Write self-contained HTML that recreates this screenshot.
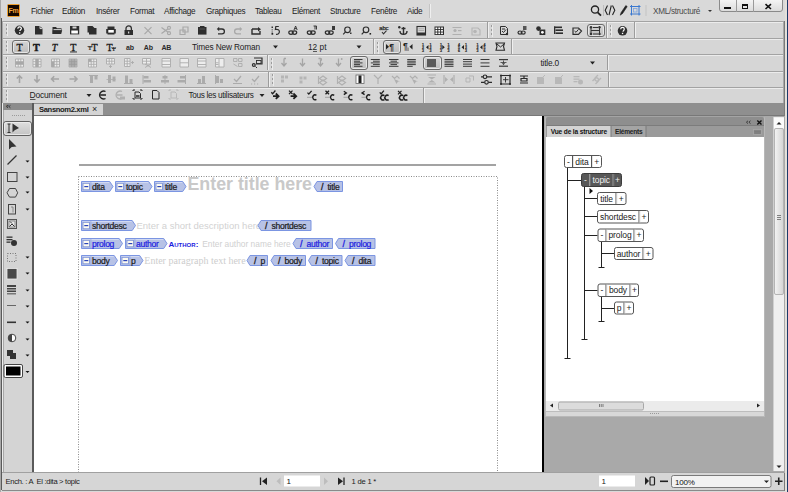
<!DOCTYPE html>
<html><head><meta charset="utf-8">
<style>
*{margin:0;padding:0;box-sizing:border-box}
html,body{width:788px;height:492px;overflow:hidden;background:#d9d9d9;font-family:"Liberation Sans",sans-serif;position:relative}
.a{position:absolute}
.mt{position:absolute;top:7px;font-size:8.2px;color:#222;letter-spacing:-0.3px;white-space:nowrap}
.tb{position:absolute;left:2px;right:4px;background:#d6d6d6;border-top:1px solid #a3a3a3;border-left:1px solid #a8a8a8;border-right:1px solid #a8a8a8}
.tb:before{content:"";position:absolute;left:0;right:0;top:0;height:1px;background:#ececec}
.grip{position:absolute;left:3px;top:2px;width:1px;height:12px;background:repeating-linear-gradient(#9c9c9c 0 2px,transparent 2px 4px);box-shadow:1px 0 0 rgba(255,255,255,.5)}
.sep{position:absolute;width:1px;background:#9c9c9c;box-shadow:1px 0 0 #efefef}
.ic{position:absolute;width:12px;height:12px}
.sel{position:absolute;border:1px solid #6a6a6a;border-radius:3px;background:linear-gradient(#d4d4d4,#bdbdbd);box-shadow:inset 0 0 0 1px #e6e6e6}
.dd{position:absolute;width:0;height:0;border-left:3px solid transparent;border-right:3px solid transparent;border-top:3px solid #1a1a1a}
.tag{position:absolute;height:11px}
.tt{position:absolute;font-size:8px;color:#1a1a1a;white-space:nowrap;top:1px}
.node{position:absolute;height:14px;border:1px solid #444;border-radius:3px;background:#fff;font-size:9px;color:#222;display:flex}
.node span{border-right:1px solid #444;display:block;text-align:center;line-height:12px}
.node span:last-child{border-right:0}
.vl{position:absolute;width:1px;background:#222}
.hl{position:absolute;height:1px;background:#222}
</style></head><body>

<!-- top window frame -->
<div class="a" style="left:0;top:0;width:1px;height:492px;background:#a8a8a8"></div>
<div class="a" style="left:1px;top:18px;width:1px;height:472px;background:#5a5a5a"></div>
<div class="a" style="left:2px;top:103px;width:1px;height:369px;background:#ececec"></div>
<div class="a" style="left:787px;top:0;width:1px;height:492px;background:#1c3a6a"></div>
<div class="a" style="left:785px;top:0;width:2px;height:492px;background:#e4e0da"></div>
<div class="a" style="left:784px;top:21px;width:1px;height:470px;background:#7a7a7a"></div>

<!-- Menu bar -->
<div class="a" style="left:6px;top:3px;width:15px;height:15px;background:#cfd9e6;border-radius:2px;opacity:.8"></div>
<div class="a" style="left:6.5px;top:4px;width:13.5px;height:12.5px;background:#160800;border:1px solid #f0a030;border-radius:1.5px"></div>
<div class="a" style="left:8.5px;top:6px;font-size:7px;font-weight:bold;color:#f5a53a;letter-spacing:-0.2px;line-height:10px">Fm</div>
<div class="mt" style="left:31px">Fichier</div>
<div class="mt" style="left:62px">Edition</div>
<div class="mt" style="left:96px">Insérer</div>
<div class="mt" style="left:130px">Format</div>
<div class="mt" style="left:164px">Affichage</div>
<div class="mt" style="left:206px">Graphiques</div>
<div class="mt" style="left:255px">Tableau</div>
<div class="mt" style="left:292px">Elément</div>
<div class="mt" style="left:330px">Structure</div>
<div class="mt" style="left:371px">Fenêtre</div>
<div class="mt" style="left:407px">Aide</div>
<div class="sep" style="left:429px;top:4px;height:14px;background:#c4c4c4"></div>

<div class="mt" style="left:653px;color:#4a4a4a">XML/structuré</div>
<div class="dd" style="left:707.5px;top:10px;border-left-width:2.5px;border-right-width:2.5px;border-top-width:2.5px;border-top-color:#333"></div>

<!-- window buttons -->
<div class="a" style="left:719px;top:-1px;width:64px;height:13px;border:1px solid #8a8a8a;border-radius:0 0 3px 3px;background:linear-gradient(#f4f4f4,#dcdcdc)"></div>
<div class="a" style="left:736px;top:0;width:1px;height:12px;background:#9a9a9a"></div>
<div class="a" style="left:753px;top:0;width:1px;height:12px;background:#9a9a9a"></div>
<div class="a" style="left:724px;top:7px;width:7px;height:2px;background:#111"></div>
<div class="a" style="left:742px;top:4px;width:6px;height:5px;border:1px solid #111;border-top-width:2px"></div>

<!-- Toolbars -->
<div class="tb" style="top:21px;height:17px"><div class="grip"></div></div>
<div class="tb" style="top:38px;height:17px"><div class="grip"></div></div>
<div class="tb" style="top:54px;height:17px"><div class="grip"></div></div>
<div class="tb" style="top:71px;height:16px"><div class="grip"></div></div>
<div class="tb" style="top:87px;height:16px"><div class="grip"></div></div>


<!-- toolbar separators -->
<div class="sep" style="left:487px;top:22px;height:16px"></div><div class="grip" style="left:491px;top:25px"></div>
<div class="sep" style="left:606px;top:22px;height:16px"></div><div class="grip" style="left:610px;top:25px"></div>
<div class="sep" style="left:634px;top:22px;height:16px"></div>
<div class="sep" style="left:373px;top:39px;height:15px"></div><div class="grip" style="left:377px;top:42px"></div>
<div class="sep" style="left:511px;top:39px;height:15px"></div>
<div class="sep" style="left:267px;top:55px;height:15px"></div><div class="grip" style="left:271px;top:58px"></div>
<div class="sep" style="left:607px;top:55px;height:15px"></div>
<div class="sep" style="left:268px;top:72px;height:15px"></div><div class="grip" style="left:272px;top:74px"></div>
<div class="sep" style="left:608px;top:72px;height:15px"></div>
<div class="sep" style="left:423px;top:88px;height:15px"></div>
<!-- selected boxes -->
<div class="sel" style="left:587px;top:24px;width:18px;height:13px"></div>
<div class="sel" style="left:12px;top:40px;width:18px;height:14px"></div>
<div class="sel" style="left:383px;top:40px;width:18px;height:14px"></div>
<div class="sel" style="left:350px;top:56px;width:18px;height:14px"></div>
<div class="sel" style="left:423px;top:56px;width:19px;height:14px"></div>

<!-- Tab bar -->
<div class="a" style="left:33px;top:103px;width:751px;height:13px;background:#8f8f8f;border-bottom:1px solid #787878"></div>
<div class="a" style="left:34px;top:104px;width:69px;height:11px;background:#d4d4d4"></div>
<div class="a" style="left:39px;top:105px;font-size:7.6px;font-weight:bold;color:#1a1a1a;letter-spacing:-0.35px;line-height:9px">Sansnom2.xml</div>
<div class="a" style="left:92px;top:104px;font-size:9px;color:#222;line-height:10px">×</div>

<!-- Left tool panel -->
<div class="a" style="left:3px;top:103px;width:31px;height:370px;background:#d4d4d4;border-right:2px solid #5a5a5a;border-left:1px solid #a8a8a8"></div>
<div class="a" style="left:3px;top:103px;width:29px;height:7px;background:#8c8c8c"></div>
<div class="a" style="left:6px;top:102px;font-size:6px;color:#444">«</div>

<!-- Document area -->
<div class="a" style="left:34px;top:116px;width:508px;height:357px;background:#fff"></div>
<div class="a" style="left:542px;top:116px;width:2px;height:357px;background:#000"></div>
<div class="a" style="left:544px;top:116px;width:241px;height:357px;background:#a9a9a9"></div>

<!-- Right panel -->
<div class="a" style="left:545px;top:116px;width:220px;height:301px;background:linear-gradient(#8e8e8e 0,#8e8e8e 8px,#7c7c7c 8px,#7c7c7c 9px,#9a9a9a 9px);border:1px solid #b8b8b8;border-top-color:#a4a4a4;border-radius:3px 3px 0 0"></div>
<div class="a" style="left:546px;top:137px;width:218px;height:264px;background:#fff"></div>

<!-- Status bar -->
<div class="a" style="left:2px;top:472px;width:782px;height:19px;background:#d6d6d6;border-top:1px solid #a0a0a0;border-bottom:1px solid #8a8a8a"></div>

<svg class="a" style="left:0;top:0" width="788" height="492" viewBox="0 0 788 492" shape-rendering="geometricPrecision">
<!-- ===== Toolbar 1 ===== -->
<g fill="#2e2e2e" stroke="none">
 <circle cx="19.5" cy="30.3" r="4.7"/>
 <path d="M35 26h5l2.5 2.6V34.6H35z"/>
 <path d="M52.5 27h3.5l1 1.2h4.5v2.3h-9z M52.3 30.2h9.9l-1 3.8h-8.9z"/>
 <path d="M70 26h9.2v8.4H70z"/>
 <path d="M87.5 26h5l2.5 2.5v6H89v-2h-1.5z M90 28h6.5v6.5H90z" />
 <path d="M107.5 26.5h7v2.5h1.3v4.5h-1.3v1h-7v-1h-1.3v-4.5h1.3z"/>
 <path d="M124.5 30h8.5v5h-8.5z"/>
 <path d="M198 27h8.5v7.6H198z"/>
</g>
<path d="M17.8 28.7c0-1.2 0.8-1.8 1.8-1.8s1.8 0.6 1.8 1.6c0 1.2-1.6 1.3-1.6 2.6" stroke="#fff" stroke-width="1.2" fill="none"/>
<rect x="19" y="32.3" width="1.3" height="1.3" fill="#fff"/>
<path d="M40 26v2.6h2.5" stroke="#fff" stroke-width="0.8" fill="none"/>
<rect x="71.3" y="30.5" width="6.6" height="3" fill="#fff"/><path d="M53.5 29.6h7.5" stroke="#fff" stroke-width="0.8"/>
<rect x="72.5" y="26.5" width="4" height="2" fill="#d6d6d6"/>
<rect x="108.3" y="30" width="5.5" height="2.6" fill="#fff"/>
<path d="M126 30v-1.5a2.7 2.7 0 0 1 5.4 0V30" stroke="#2e2e2e" stroke-width="1.3" fill="none"/>
<rect x="128.2" y="31.5" width="1" height="2" fill="#fff"/>
<rect x="200" y="26" width="4.5" height="2" fill="#2e2e2e"/>
<rect x="199.5" y="28.5" width="5.5" height="1" fill="#555"/>
<!-- gray disabled -->
<g stroke="#a8a8a8" stroke-width="1.2" fill="none">
 <path d="M144.5 27.2l7 7M151.5 27.2l-7 7"/>
 <circle cx="169" cy="27.8" r="1.5"/><circle cx="169" cy="33.2" r="1.5"/>
 <path d="M161.5 27.5l6.3 4.5M161.5 33.5l6.3-4.5"/>
 <path d="M183 27h5v5h-5z M180 30h5v4.5h-5z"/>
</g>
<!-- undo -->
<path d="M218.5 29h3.5a2.4 2.4 0 0 1 0 4.8h-4" stroke="#2e2e2e" stroke-width="1.3" fill="none"/>
<path d="M216.8 29l2.4-2.2v4.4z" fill="#2e2e2e"/>
<path d="M240.5 29h-3.5a2.4 2.4 0 0 0 0 4.8h4" stroke="#a8a8a8" stroke-width="1.3" fill="none"/>
<path d="M242.2 29l-2.4-2.2v4.4z" fill="#a8a8a8"/>
<!-- repeat box -->
<path d="M252 29h6M252 29v5h8v-3" stroke="#2e2e2e" stroke-width="1.4" fill="none"/>
<path d="M258 27l3 2.2-3 2.2z" fill="#2e2e2e"/>
<!-- !5 -->
<rect x="271.5" y="26.5" width="1.5" height="1.5" fill="#333"/><rect x="271.5" y="29" width="1.5" height="1.5" fill="#888"/><rect x="271.5" y="31.3" width="1.5" height="1.5" fill="#888"/><rect x="271.5" y="33" width="1.7" height="1.7" fill="#222"/>
<path d="M275.3 26.5h3.5M275.8 26.5l-0.4 3c2.5-0.5 4 0.5 4 2.2 0 1.6-1.4 2.8-3.4 2.6" stroke="#2e2e2e" stroke-width="1.2" fill="none"/>
<!-- links -->
<g stroke="#2e2e2e" stroke-width="1.2" fill="none">
 <ellipse cx="291" cy="32.6" rx="2.2" ry="1.7"/><ellipse cx="294.5" cy="32.6" rx="2.2" ry="1.7"/>
 <ellipse cx="309.5" cy="32.6" rx="2.2" ry="1.7"/><ellipse cx="313" cy="32.6" rx="2.2" ry="1.7"/>
 <ellipse cx="327.5" cy="32.6" rx="2.2" ry="1.7"/><ellipse cx="331" cy="32.6" rx="2.2" ry="1.7"/>
 <circle cx="347.5" cy="29.8" r="2.8"/><path d="M345.5 31.8l-2.3 2.6"/>
 <circle cx="366" cy="29.8" r="2.8"/><path d="M364 31.8l-2.3 2.6"/>
</g>
<path d="M294 30l1.6-4 1.6 4M294.6 28.6h2" stroke="#2e2e2e" stroke-width="0.9" fill="none"/>
<path d="M313.5 26h3v3.5M315 26v3.5" stroke="#2e2e2e" stroke-width="0.9" fill="none"/>
<rect x="332" y="26" width="3" height="4" fill="#3a3a3a"/>
<rect x="350" y="32.5" width="1.5" height="1.5" fill="#333"/>
<rect x="369.5" y="33" width="1.6" height="1.6" fill="#222"/>
<text x="379.3" y="30.2" font-family="Liberation Sans" font-size="6" fill="#2a2a2a" stroke="#2a2a2a" stroke-width="0.25" letter-spacing="-0.2">abc</text>
<path d="M382 32l1.5 1.8 3-3.2" stroke="#333" stroke-width="1.1" fill="none"/>
<!-- anchor -->
<g stroke="#2e2e2e" stroke-width="1.4" fill="none">
 <path d="M403.5 27v7.5M400 31c0 2.2 1.5 3.3 3.5 3.3s3.5-1.1 3.5-3.3M401.5 28.5h4"/>
</g>
<circle cx="399.3" cy="27.3" r="1.2" fill="#2e2e2e"/>
<!-- table box -->
<rect x="417" y="26.5" width="8.5" height="8.5" fill="none" stroke="#2e2e2e" stroke-width="1.1"/>
<rect x="417" y="32.5" width="8.5" height="2.5" fill="#2e2e2e"/>
<path d="M418.5 28.8h5.5M418.5 30.5h5.5" stroke="#999" stroke-width="0.7"/>
<!-- grid -->
<rect x="434.5" y="26.5" width="9.5" height="8.5" fill="#2e2e2e"/>
<g fill="#fff"><rect x="435.5" y="27.5" width="1.8" height="1.6"/><rect x="438.3" y="27.5" width="1.8" height="1.6"/><rect x="441.1" y="27.5" width="1.8" height="1.6"/>
<rect x="435.5" y="30" width="1.8" height="1.6"/><rect x="438.3" y="30" width="1.8" height="1.6"/><rect x="441.1" y="30" width="1.8" height="1.6"/>
<rect x="435.5" y="32.5" width="1.8" height="1.6"/><rect x="438.3" y="32.5" width="1.8" height="1.6"/><rect x="441.1" y="32.5" width="1.8" height="1.6"/></g>
<!-- gray -->
<g fill="#b0b0b0"><rect x="452.5" y="27" width="9" height="1"/><rect x="452.5" y="34" width="9" height="1"/><circle cx="455" cy="30.5" r="1.6"/><rect x="458" y="30" width="3.5" height="1.2"/></g>
<path d="M472 28h6l2 2v5h-8z" fill="none" stroke="#b5b5b5" stroke-width="1.1"/><circle cx="475" cy="31.5" r="1.8" fill="#b5b5b5"/>
<!-- second section -->
<g stroke="#2e2e2e" stroke-width="1" fill="none">
 <path d="M500.5 26.5h5l2 2v6h-7z"/>
 <path d="M502 29h3M502 31l1.5 1.5 2.5-3"/>
 <ellipse cx="520" cy="32.6" rx="2" ry="1.6" stroke-width="1.2"/><ellipse cx="523.2" cy="32.6" rx="2" ry="1.6" stroke-width="1.2"/>
</g>
<rect x="523" y="26" width="3.5" height="4" fill="#555"/>
<circle cx="507" cy="34" r="1.2" fill="#2e2e2e"/>
<circle cx="538.5" cy="28.6" r="2.3" fill="#2e2e2e"/>
<rect x="539.5" y="29.5" width="5.8" height="5.5" fill="#2e2e2e"/>
<circle cx="542.4" cy="32.3" r="1.4" fill="#fff"/>
<g fill="#2e2e2e"><rect x="554" y="26.5" width="8" height="1.6"/><rect x="555.5" y="29.4" width="7.5" height="1.6"/><rect x="555.5" y="32.4" width="7.5" height="1.6"/><rect x="554" y="26.5" width="1.3" height="7.5"/></g>
<path d="M573 28h5.5l3 3-3 3.3H573z" fill="none" stroke="#2e2e2e" stroke-width="1.2"/>
<path d="M574.5 31l1.5 1.3 2.5-3" stroke="#2e2e2e" stroke-width="1" fill="none"/>
<g stroke="#333" stroke-width="1" fill="none"><path d="M591 27v7M599.5 27v7M591 30.5h8.5"/></g>
<g fill="#333"><circle cx="591" cy="27.3" r="1.2"/><circle cx="591" cy="34" r="1.2"/><circle cx="599.5" cy="27.3" r="1.2"/><circle cx="599.5" cy="34" r="1.2"/><rect x="593" y="27" width="5" height="1"/><rect x="593" y="33.5" width="5" height="1"/></g>
<circle cx="622.5" cy="30.8" r="4.8" fill="#2e2e2e"/>
<path d="M620.7 29.2c0-1.2 0.8-1.8 1.8-1.8s1.8 0.6 1.8 1.6c0-0 0 1.3-1.6 2.6" stroke="#fff" stroke-width="1.2" fill="none"/>
<rect x="621.9" y="32.8" width="1.3" height="1.3" fill="#fff"/>
</svg>

<svg class="a" style="left:0;top:0" width="788" height="492" viewBox="0 0 788 492">
<!-- ===== Toolbar 2 ===== -->
<g font-family="Liberation Serif" fill="#1a1a1a" stroke="#1a1a1a" stroke-width="0.35">
 <text x="16.5" y="51" font-size="10">T</text>
 <text x="33" y="51" font-size="10" font-weight="bold" stroke-width="0.5">T</text>
 <text x="51.8" y="51" font-size="10" font-style="italic">T</text>
 <text x="70.3" y="50.5" font-size="10">T</text>
 <text x="91.5" y="51" font-size="10">T</text>
 <text x="106.5" y="51" font-size="10">T</text>
</g>
<rect x="70" y="51.5" width="7" height="0.9" fill="#222"/>
<text x="87.8" y="49.5" font-family="Liberation Serif" font-size="7" fill="#222" stroke="#222" stroke-width="0.2">T</text>
<rect x="88.2" y="46.5" width="4.2" height="0.8" fill="#222"/>
<text x="111.5" y="50.5" font-family="Liberation Serif" font-size="7" fill="#222" stroke="#222" stroke-width="0.2">T</text>
<rect x="111.8" y="48" width="4" height="0.8" fill="#222"/>
<g font-family="Liberation Sans" font-weight="bold" fill="#2a2a2a" font-size="7">
 <text x="126" y="50.2" letter-spacing="-0.2">ab</text>
 <text x="143.8" y="50.2" letter-spacing="-0.2">Ab</text>
 <text x="161.5" y="50.2" letter-spacing="-0.3">AB</text>
</g>
<text x="192" y="50" font-family="Liberation Sans" font-size="8.3" fill="#222" letter-spacing="-0.15">Times New Roman</text>
<path d="M273 45.5h5l-2.5 3z" fill="#222"/>
<text x="308" y="50" font-family="Liberation Sans" font-size="8.3" fill="#222">12 pt</text>
<rect x="313" y="51" width="4" height="0.7" fill="#222"/>
<path d="M356.5 45.5h5l-2.5 3z" fill="#222"/>
<!-- paragraph icons -->
<path d="M386 44l3 2.8-3 2.8z" fill="#222"/>
<text x="389.2" y="50" font-family="Liberation Sans" font-weight="bold" font-size="8.5" fill="#222">¶</text>
<text x="403" y="49" font-family="Liberation Sans" font-weight="bold" font-size="8.5" fill="#222">¶</text>
<path d="M412.5 44l-3 2.8 3 2.8z" fill="#222"/>
<rect x="406.5" y="47.5" width="2.5" height="3.5" fill="#999"/>
<g fill="#222" stroke="#222" stroke-width="0.15" font-family="Liberation Sans" font-weight="bold" font-size="3.6">
 <text x="422" y="45.5">1</text><text x="422" y="48.5">2</text><text x="422" y="51.5">3</text>
 <text x="429.5" y="45.5">1</text><text x="429.5" y="48.5">2</text><text x="429.5" y="51.5">3</text>
 <text x="440" y="45.5">1</text><text x="440" y="48.5">2</text><text x="440" y="51.5">3</text>
 <text x="447.5" y="45.5">1</text><text x="447.5" y="48.5">2</text><text x="447.5" y="51.5">3</text>
 <text x="458" y="45.5">4</text><text x="458" y="48.5">5</text><text x="458" y="51.5">6</text>
 <text x="465" y="45.5">1</text><text x="465" y="48.5">2</text><text x="465" y="51.5">3</text>
 <text x="476.5" y="45.5">1</text><text x="476.5" y="48.5">2</text><text x="476.5" y="51.5">3</text>
 <text x="483.5" y="45.5">4</text><text x="483.5" y="48.5">5</text><text x="483.5" y="51.5">6</text>
</g>
<path d="M428.5 45l-2.5 2.2 2.5 2.2z M442.3 45l2.5 2.2-2.5 2.2z M464 45l-2.5 2.2 2.5 2.2z M482.5 45l-2.5 2.2 2.5 2.2z" fill="#222"/>
<path d="M496 43h8.5l-1 3.5 1 3.8h-8.5l1-3.8z" fill="none" stroke="#2a2a2a" stroke-width="1.1"/>
<path d="M497 44l3.5 3 3.5-3" stroke="#2a2a2a" stroke-width="1" fill="none"/>
<!-- ===== Toolbar 3 ===== -->
<g fill="#ededed"><rect x="15.5" y="59" width="8" height="8"/><rect x="33" y="59" width="8" height="8"/><rect x="51.5" y="59" width="8" height="8"/><rect x="88.5" y="59" width="8" height="8"/><rect x="106.5" y="58.5" width="8" height="5.5"/><rect x="124.5" y="58.5" width="5.5" height="8"/><rect x="142.5" y="58.5" width="8" height="5.5"/><rect x="162" y="58.5" width="8.5" height="8.5"/><rect x="180" y="58.5" width="8.5" height="8.5"/><rect x="197.5" y="58.5" width="8.5" height="8.5"/><rect x="215.5" y="58.5" width="8.5" height="8.5"/></g>
<g fill="none" stroke="#ababab" stroke-width="0.9">
 <path d="M15.5 59h8v8h-8z M15.5 61.7h8M15.5 64.3h8M18.2 59v8M20.8 59v8"/>
 <path d="M33 59h8v8h-8z M33 61.7h8M33 64.3h8M35.7 59v8M38.3 59v8"/>
 <path d="M51.5 59h8v8h-8z M51.5 61.7h8M51.5 64.3h8M54.2 59v8M56.8 59v8"/>
 <path d="M69 59h8v8h-8z M69 61.7h8M69 64.3h8M71.7 59v8M74.3 59v8"/>
 <path d="M88.5 59h8v8h-8z M88.5 61.7h8M88.5 64.3h8M91.2 59v8M93.8 59v8"/>
 <path d="M106.5 58.5h8v5.5h-8z M106.5 61.2h8M109.2 58.5v5.5M111.8 58.5v5.5M110.5 65v3M109 66.5h3"/>
 <path d="M124.5 58.5h5.5v8h-5.5z M124.5 61.2h5.5M124.5 63.8h5.5M127.2 58.5v8M131 62.5h3M132.5 61v3"/>
 <path d="M142.5 58.5h8v5.5h-8z M142.5 61.2h8M146.5 58.5v5.5M145 64l6 3.5M145 67.5l6-3.5"/>
 <path d="M162 58.5h8.5v8.5H162z M162 61h8.5M162 64.5h8.5"/>
 <path d="M180 58.5h8.5v8.5H180z M180 62.8h8.5"/>
 <path d="M197.5 58.5h8.5v8.5h-8.5z M197.5 61h8.5M197.5 64.5h8.5"/>
 <path d="M215.5 58.5h8.5v8.5h-8.5z M215.5 62.8h3M219 58.5v8.5M215.5 64.5h3"/>
 <path d="M233.5 58.5h3.5v3h-3.5z M238.5 58.5h3.5v3h-3.5z M238.5 63.5h3.5v3h-3.5z M233.5 64l4 2.5"/>
</g>
<g fill="#a8a8a8">
 <rect x="15.5" y="61.7" width="8" height="2.6"/>
 <rect x="35.7" y="59" width="2.6" height="8"/>
 <rect x="51.5" y="61.7" width="2.7" height="5.3"/>
 <rect x="69" y="59" width="8" height="8" fill="#b0b0b0"/>
 <rect x="88.5" y="59" width="2.7" height="2.7"/>
</g>
<path d="M69 61.7h8M69 64.3h8M71.7 59v8M74.3 59v8" stroke="#9a9a9a" stroke-width="0.8"/>
<path d="M254 58h8v6h-6" fill="none" stroke="#2e2e2e" stroke-width="1.2"/>
<rect x="256.5" y="60.5" width="4.5" height="3" fill="none" stroke="#2e2e2e" stroke-width="0.9"/>
<circle cx="253.8" cy="65" r="2" fill="#2e2e2e"/><circle cx="253.8" cy="65" r="0.8" fill="#d6d6d6"/>
<path d="M255.5 66.5l1.5 1.5" stroke="#2e2e2e" stroke-width="1"/>
<g stroke="#a5a5a5" stroke-width="1.3" fill="none">
 <path d="M284 58.5v7M281.5 63l2.5 3 2.5-3M284 58.5h2"/>
 <path d="M302.5 58.5v7M300 63l2.5 3 2.5-3"/>
 <path d="M320.5 59.5v6M318 63l2.5 3 2.5-3M318.5 58.5h2a1 1 0 0 1 0 2"/>
 <path d="M338.5 58.5v7M336 63l2.5 3 2.5-3"/>
</g>
<circle cx="341.7" cy="59" r="0.9" fill="#a5a5a5"/>
<!-- align -->
<g fill="#3a3a3a">
 <rect x="354" y="59" width="8.5" height="1"/><rect x="354" y="60.7" width="6" height="1"/><rect x="354" y="62.4" width="8.5" height="1"/><rect x="354" y="64.1" width="6" height="1"/><rect x="354" y="65.8" width="8.5" height="1"/>
 <rect x="370.8" y="59" width="9" height="1"/><rect x="373" y="60.7" width="6.8" height="1"/><rect x="370.8" y="62.4" width="9" height="1"/><rect x="373" y="64.1" width="6.8" height="1"/><rect x="370.8" y="65.8" width="9" height="1"/>
 <rect x="389" y="59" width="9.5" height="1"/><rect x="390.5" y="60.7" width="6.5" height="1"/><rect x="389" y="62.4" width="9.5" height="1"/><rect x="390.5" y="64.1" width="6.5" height="1"/><rect x="389" y="65.8" width="9.5" height="1"/>
 <rect x="407.2" y="59" width="8.6" height="1"/><rect x="407.2" y="60.7" width="8.6" height="1"/><rect x="407.2" y="62.4" width="8.6" height="1"/><rect x="407.2" y="64.1" width="8.6" height="1"/><rect x="407.2" y="65.8" width="5.5" height="1"/>
 <rect x="427" y="59" width="9" height="8" fill="#5a5a5a"/>
 <rect x="444.5" y="59" width="9" height="1"/><rect x="444.5" y="60.7" width="9" height="1"/><rect x="444.5" y="62.4" width="9" height="1"/><rect x="444.5" y="64.1" width="9" height="1"/><rect x="444.5" y="65.8" width="9" height="1"/>
 <rect x="463" y="59" width="9" height="1"/><rect x="463" y="61.2" width="9" height="1"/><rect x="463" y="63.6" width="9" height="1"/><rect x="463" y="65.8" width="9" height="1"/>
 <rect x="480.5" y="59" width="9" height="1"/><rect x="480.5" y="62.4" width="9" height="1"/><rect x="480.5" y="65.8" width="9" height="1"/>
 <rect x="499" y="59" width="9" height="1.2"/><rect x="499" y="65.6" width="9" height="1.2"/><rect x="500.5" y="62.2" width="6" height="0.8"/>
</g>
<path d="M503.5 60.5v4M502.2 63.2l1.3 1.5 1.3-1.5" stroke="#3a3a3a" stroke-width="0.8" fill="none"/>
<text x="540.5" y="65.5" font-family="Liberation Sans" font-size="8.3" fill="#222" letter-spacing="-0.2">title.0</text>
<path d="M590 61.5h5l-2.5 3z" fill="#222"/>
<!-- ===== Toolbar 4 ===== -->
<g stroke="#a5a5a5" stroke-width="1.6" fill="none">
 <path d="M19.5 76v7M16.8 78.5l2.7-2.7 2.7 2.7"/>
 <path d="M37 75v7M34.3 79.3l2.7 2.7 2.7-2.7"/>
 <path d="M51.5 79h7.5M54.2 76.3l-2.7 2.7 2.7 2.7"/>
 <path d="M69.5 79h7.5M74.3 76.3l2.7 2.7-2.7 2.7"/>
</g>
<g fill="#ababab">
 <rect x="89" y="75" width="9" height="1"/><rect x="90" y="76" width="3" height="7"/><rect x="94.5" y="76" width="3" height="3.5"/>
 <rect x="106.5" y="79" width="9" height="0.8"/><rect x="108" y="75" width="3" height="8"/><rect x="112.5" y="76.5" width="3" height="5"/>
 <rect x="124" y="83" width="9" height="1"/><rect x="125" y="75.5" width="3" height="7.5"/><rect x="129.5" y="79" width="3" height="4"/>
 <rect x="142.5" y="75" width="1" height="9"/><rect x="143.5" y="76" width="5" height="2.5"/><rect x="143.5" y="80" width="7.5" height="2.5"/>
 <rect x="164.5" y="75" width="1" height="9"/><rect x="162.5" y="76" width="5" height="2.5"/><rect x="161" y="80" width="8" height="2.5"/>
 <rect x="185" y="75" width="1" height="9"/><rect x="180" y="76" width="5" height="2.5"/><rect x="177.5" y="80" width="7.5" height="2.5"/>
 <rect x="197" y="83" width="9" height="1"/><rect x="198" y="79" width="3" height="4"/><rect x="202" y="76" width="3" height="7"/>
 <rect x="215" y="75" width="1" height="9"/><rect x="216" y="76" width="3" height="7"/><rect x="220" y="79" width="3" height="4"/>
 <rect x="233" y="83" width="9" height="1"/><rect x="251" y="83.5" width="1.2" height="1"/><rect x="254" y="83.5" width="1.2" height="1"/><rect x="257" y="83.5" width="1.2" height="1"/>
</g>
<path d="M234 79l2.5 2.5 4.5-5.5M252 79l2.5 2.5 4.5-5.5" stroke="#ababab" stroke-width="1.3" fill="none"/>
<g fill="#b5b5b5">
 <rect x="281" y="75.5" width="3" height="3"/><rect x="285" y="75.5" width="3" height="3"/><rect x="281" y="79.5" width="3" height="3"/>
 <rect x="299.5" y="76.5" width="3" height="3"/><rect x="303.5" y="76.5" width="3" height="3"/><rect x="299.5" y="80.5" width="3" height="3"/>
</g>
<g stroke="#b0b0b0" stroke-width="1.2" fill="none">
 <path d="M318.5 76v8M323 76l3.5 2.5-3.5 2.5-3.5-2.5z M323 80l3.5 2.5-3.5 2.5-3.5-2.5z"/>
 <path d="M337.5 76v8M342 76l3.5 2.5-3.5 2.5-3.5-2.5z M342 80l3.5 2.5-3.5 2.5-3.5-2.5z"/>
 <path d="M374 75l4 4 4-4M378 79v5"/>
 <path d="M392 76l2.5 2.5 2.5-2.5 2.5 2.5"/>
 <path d="M410 76l2.5 2.5 2.5-2.5 2.5 2.5"/>
 <path d="M427.5 75h8.5M427.5 84h8.5"/>
 <path d="M444 75v9M454 75v9"/>
</g>
<rect x="356" y="75" width="8" height="8.5" fill="#fff" stroke="#666" stroke-width="0.8"/>
<rect x="358.5" y="75.5" width="3" height="7.5" fill="#1e1e1e"/>
<path d="M394 79l2.5 5 1.5-2.5 2 0z M412 79l2.5 5 1.5-2.5 2 0z M428 77h7.5l-3.7 2.5z M428 82.5h7.5l-3.7-2.5z M445 77v5l3-2.5z M453 77v5l-3-2.5z" fill="#b0b0b0"/>
<path d="M466 78h4v4h-4z M469 76h4.5v4.5" fill="none" stroke="#b5b5b5" stroke-width="1"/>
<!-- dark align icons -->
<g stroke="#2a2a2a" stroke-width="1.2" fill="none">
 <circle cx="485" cy="76.8" r="1.8"/><circle cx="486.5" cy="82.3" r="1.8"/>
 <path d="M481 76.8h2M487 76.8h5M481 82.3h3.5M488.5 82.3h3.5"/>
 <path d="M501 75.5h9v8.5h-9z"/>
 <path d="M520 76h8M520 83h8M524 76v2.5M521 78.5h6v2.5h-6z"/>
</g>
<path d="M505.5 77v5.5M503 79.7h5.5" stroke="#2a2a2a" stroke-width="0.9"/>
<g fill="#2a2a2a"><circle cx="501" cy="75.5" r="1"/><circle cx="510" cy="75.5" r="1"/><circle cx="501" cy="84" r="1"/><circle cx="510" cy="84" r="1"/></g>
<g fill="#b8b8b8">
 <path d="M537 77h6l1 1v6h-7z M555 77h6l1 1v6h-7z"/>
 <rect x="573.5" y="76" width="6" height="1.3"/><rect x="573.5" y="78.5" width="6" height="1.3"/><rect x="573.5" y="81" width="4" height="1.3"/><circle cx="580.5" cy="82" r="2.5"/>
</g>
<path d="M543 77l2-2M561 77l2-2" stroke="#b8b8b8" stroke-width="1"/>
<g stroke="#b8b8b8" stroke-width="1.4" fill="none"><path d="M592.5 81l2.5-2.5a2 2 0 0 1 3 3l-2.5 2.5 M601 78l-2.5 2.5a2 2 0 0 1-3-3l2.5-2.5"/></g>
</svg>

<svg class="a" style="left:0;top:0" width="788" height="492" viewBox="0 0 788 492">
<!-- ===== Toolbar 5 ===== -->
<text x="29.5" y="98" font-family="Liberation Sans" font-size="8.5" fill="#222" letter-spacing="-0.2">Document</text>
<rect x="30" y="99" width="5.5" height="0.7" fill="#222"/>
<path d="M86.5 94h5l-2.5 3z" fill="#222"/>
<path d="M105.5 91.5a4 4 0 1 0 0 7M100.5 95h5.5" stroke="#222" stroke-width="1.4" fill="none"/>
<path d="M122 91.5a4 4 0 1 0 0 7M117 95h5.5" stroke="#b0b0b0" stroke-width="1.4" fill="none"/>
<rect x="120" y="96.5" width="5" height="3" fill="#b0b0b0"/>
<g stroke="#2a2a2a" stroke-width="1" fill="none">
 <path d="M133 91v-1h2M140 90h2v1M142 98v1h-2M135 99h-2v-1"/>
 <path d="M135 92h4l1.5 1.5v4.5H135z"/>
 <path d="M152.5 90.5h4.5l2 2v6.5h-6.5z"/>
</g>
<rect x="136" y="95" width="3.5" height="2" fill="#555"/>
<g stroke="#b8b8b8" stroke-width="1" fill="none">
 <path d="M169 91v-1h2M176 90h2v1M178 98v1h-2M171 99h-2v-1"/>
 <path d="M171 92h4l1.5 1.5v4.5H171z"/>
</g>
<text x="188.5" y="97.8" font-family="Liberation Sans" font-size="8.2" fill="#222" letter-spacing="-0.3">Tous les utilisateurs</text>
<path d="M259.5 94h5l-2.5 3z" fill="#222"/>
<g stroke="#1e1e1e" fill="none">
<path d="M271.3 92.3l1.3 1.5 2.8-3.3" stroke-width="1.3"/>
<path d="M273 96.2h5M275.8 93.5l2.8 2.7-2.8 2.7" stroke-width="1.8"/>
<path d="M289 90.6l3.5 3.5M292.5 90.6l-3.5 3.5" stroke-width="1.3"/>
<path d="M290.6 96.2h5M293.4 93.5l2.8 2.7-2.8 2.7" stroke-width="1.8"/>
<path d="M307.5 92.6l1.3 1.5 2.8-3.3" stroke-width="1.3"/>
<path d="M316.4 95.3a2.4 2.4 0 1 0 0 4" stroke-width="1.5"/>
<path d="M325.5 90.8l3.5 3.5M329.0 90.8l-3.5 3.5" stroke-width="1.3"/>
<path d="M334.2 95.3a2.4 2.4 0 1 0 0 4" stroke-width="1.5"/>
<path d="M343.8 91.2l2.6 1.7-2.6 1.7" stroke-width="1.3"/>
<path d="M352.4 95.3a2.4 2.4 0 1 0 0 4" stroke-width="1.5"/>
<path d="M364.6 91.2l-2.6 1.7 2.6 1.7" stroke-width="1.3"/>
<path d="M370.2 95.3a2.4 2.4 0 1 0 0 4" stroke-width="1.5"/>
<path d="M379.8 92.39999999999999l1.3 1.5 2.8-3.3" stroke-width="1.3"/>
<path d="M384.4 95.6a2.4 2.4 0 1 0 0 4M388.6 95.6a2.4 2.4 0 1 0 0 4" stroke-width="1.5"/>
<path d="M398 90.8l3.5 3.5M401.5 90.8l-3.5 3.5" stroke-width="1.2"/>
<path d="M403.2 95.6a2.4 2.4 0 1 0 0 4M407.4 95.6a2.4 2.4 0 1 0 0 4" stroke-width="1.5"/>
</g>
<g stroke="#9a9a9a" stroke-width="0.9"><path d="M307 97.3h5M325 97.3h5M343.5 97.3h4.5M361.5 97.3h4.5"/></g>
</svg>

<svg class="a" style="left:0;top:0" width="788" height="492" viewBox="0 0 788 492">
<rect x="79" y="164" width="417" height="2" fill="#a3a3a3"/>
<path d="M78.5 176.5H497.5V472M78.5 176.5V472" stroke="#8a8a8a" stroke-width="1" stroke-dasharray="1 1.5" fill="none"/>
<path d="M81.5 181.5H109.7L113 186.5L109.7 191.5H81.5Z" fill="#b7c2e6" stroke="#7b95e2" stroke-width="1"/>
<path d="M82.5 182.5H109.2" stroke="#d2daf2" stroke-width="1"/>
<rect x="83" y="183.3" width="6.5" height="6.5" fill="#fdfbf0" stroke="#7f95d8" stroke-width="0.9"/>
<rect x="84.3" y="186" width="4" height="1.2" fill="#2a44b8"/>
<rect x="90.5" y="182" width="0.8" height="9" fill="#95a8e0"/>
<text x="92" y="189.6" font-family="Liberation Sans" font-size="8.6" letter-spacing="-0.3" fill="#1a1a1a" stroke="#1a1a1a" stroke-width="0.2">dita</text>
<path d="M115.5 181.5H148.7L152 186.5L148.7 191.5H115.5Z" fill="#b7c2e6" stroke="#7b95e2" stroke-width="1"/>
<path d="M116.5 182.5H148.2" stroke="#d2daf2" stroke-width="1"/>
<rect x="117" y="183.3" width="6.5" height="6.5" fill="#fdfbf0" stroke="#7f95d8" stroke-width="0.9"/>
<rect x="118.3" y="186" width="4" height="1.2" fill="#2a44b8"/>
<rect x="124.5" y="182" width="0.8" height="9" fill="#95a8e0"/>
<text x="126" y="189.6" font-family="Liberation Sans" font-size="8.6" letter-spacing="-0.3" fill="#1a1a1a" stroke="#1a1a1a" stroke-width="0.2">topic</text>
<path d="M154.5 181.5H182.7L186 186.5L182.7 191.5H154.5Z" fill="#b7c2e6" stroke="#7b95e2" stroke-width="1"/>
<path d="M155.5 182.5H182.2" stroke="#d2daf2" stroke-width="1"/>
<rect x="156" y="183.3" width="6.5" height="6.5" fill="#fdfbf0" stroke="#7f95d8" stroke-width="0.9"/>
<rect x="157.3" y="186" width="4" height="1.2" fill="#2a44b8"/>
<rect x="163.5" y="182" width="0.8" height="9" fill="#95a8e0"/>
<text x="165" y="189.6" font-family="Liberation Sans" font-size="8.6" letter-spacing="-0.3" fill="#1a1a1a" stroke="#1a1a1a" stroke-width="0.2">title</text>
<text x="187.5" y="189.5" font-family="Liberation Sans" font-weight="bold" font-size="17.8" fill="#c9c9c9">Enter title here</text>
<path d="M314 186.5L317 181.5H342.5V191.5H317Z" fill="#b7c2e6" stroke="#7b95e2" stroke-width="1"/>
<text x="321" y="189.8" font-family="Liberation Sans" font-size="9" fill="#1a1a1a" stroke="#1a1a1a" stroke-width="0.3">/</text>
<text x="327.5" y="189.6" font-family="Liberation Sans" font-size="8.6" letter-spacing="-0.3" fill="#1a1a1a" stroke="#1a1a1a" stroke-width="0.2">title</text>
<path d="M81.5 220.5H132.2L135.5 225.5L132.2 230.5H81.5Z" fill="#b7c2e6" stroke="#7b95e2" stroke-width="1"/>
<path d="M82.5 221.5H131.7" stroke="#d2daf2" stroke-width="1"/>
<rect x="83" y="222.3" width="6.5" height="6.5" fill="#fdfbf0" stroke="#7f95d8" stroke-width="0.9"/>
<rect x="84.3" y="225" width="4" height="1.2" fill="#2a44b8"/>
<rect x="90.5" y="221" width="0.8" height="9" fill="#95a8e0"/>
<text x="92" y="228.6" font-family="Liberation Sans" font-size="8.6" letter-spacing="-0.3" fill="#1a1a1a" stroke="#1a1a1a" stroke-width="0.2">shortdesc</text>
<text x="136.5" y="229.3" font-family="Liberation Sans" font-size="9.5" fill="#d2d2d2">Enter a short description here</text>
<path d="M258 225.5L261 220.5H311.0V230.5H261Z" fill="#b7c2e6" stroke="#7b95e2" stroke-width="1"/>
<text x="265" y="228.8" font-family="Liberation Sans" font-size="9" fill="#1a1a1a" stroke="#1a1a1a" stroke-width="0.3">/</text>
<text x="271.5" y="228.6" font-family="Liberation Sans" font-size="8.6" letter-spacing="-0.3" fill="#1a1a1a" stroke="#1a1a1a" stroke-width="0.2">shortdesc</text>
<path d="M81.5 238.5H119.2L122.5 243.5L119.2 248.5H81.5Z" fill="#b7c2e6" stroke="#7b95e2" stroke-width="1"/>
<path d="M82.5 239.5H118.7" stroke="#d2daf2" stroke-width="1"/>
<rect x="83" y="240.3" width="6.5" height="6.5" fill="#fdfbf0" stroke="#7f95d8" stroke-width="0.9"/>
<rect x="84.3" y="243" width="4" height="1.2" fill="#2a44b8"/>
<rect x="90.5" y="239" width="0.8" height="9" fill="#95a8e0"/>
<text x="92" y="246.6" font-family="Liberation Sans" font-size="8.6" letter-spacing="-0.3" fill="#1c1ce0" stroke="#1c1ce0" stroke-width="0.2">prolog</text>
<path d="M125.5 238.5H163.7L167 243.5L163.7 248.5H125.5Z" fill="#b7c2e6" stroke="#7b95e2" stroke-width="1"/>
<path d="M126.5 239.5H163.2" stroke="#d2daf2" stroke-width="1"/>
<rect x="127" y="240.3" width="6.5" height="6.5" fill="#fdfbf0" stroke="#7f95d8" stroke-width="0.9"/>
<rect x="128.3" y="243" width="4" height="1.2" fill="#2a44b8"/>
<rect x="134.5" y="239" width="0.8" height="9" fill="#95a8e0"/>
<text x="136" y="246.6" font-family="Liberation Sans" font-size="8.6" letter-spacing="-0.3" fill="#1c1ce0" stroke="#1c1ce0" stroke-width="0.2">author</text>
<text x="168.5" y="247.3" font-family="Liberation Sans" font-weight="bold" font-size="8" fill="#1c1ce0">A<tspan font-size="6">UTHOR</tspan>:</text>
<text x="202.2" y="247.3" font-family="Liberation Sans" font-size="8.4" fill="#d0d0d0">Enter author name here</text>
<path d="M293 243.5L296 238.5H332.5V248.5H296Z" fill="#b7c2e6" stroke="#7b95e2" stroke-width="1"/>
<text x="300" y="246.8" font-family="Liberation Sans" font-size="9" fill="#1c1ce0" stroke="#1c1ce0" stroke-width="0.3">/</text>
<text x="306.5" y="246.6" font-family="Liberation Sans" font-size="8.6" letter-spacing="-0.3" fill="#1c1ce0" stroke="#1c1ce0" stroke-width="0.2">author</text>
<path d="M335.5 243.5L338.5 238.5H375.0V248.5H338.5Z" fill="#b7c2e6" stroke="#7b95e2" stroke-width="1"/>
<text x="342.5" y="246.8" font-family="Liberation Sans" font-size="9" fill="#1c1ce0" stroke="#1c1ce0" stroke-width="0.3">/</text>
<text x="349.0" y="246.6" font-family="Liberation Sans" font-size="8.6" letter-spacing="-0.3" fill="#1c1ce0" stroke="#1c1ce0" stroke-width="0.2">prolog</text>
<path d="M81.5 255.5H114.2L117.5 260.5L114.2 265.5H81.5Z" fill="#b7c2e6" stroke="#7b95e2" stroke-width="1"/>
<path d="M82.5 256.5H113.7" stroke="#d2daf2" stroke-width="1"/>
<rect x="83" y="257.3" width="6.5" height="6.5" fill="#fdfbf0" stroke="#7f95d8" stroke-width="0.9"/>
<rect x="84.3" y="260" width="4" height="1.2" fill="#2a44b8"/>
<rect x="90.5" y="256" width="0.8" height="9" fill="#95a8e0"/>
<text x="92" y="263.6" font-family="Liberation Sans" font-size="8.6" letter-spacing="-0.3" fill="#1a1a1a" stroke="#1a1a1a" stroke-width="0.2">body</text>
<path d="M120.5 255.5H139.7L143 260.5L139.7 265.5H120.5Z" fill="#b7c2e6" stroke="#7b95e2" stroke-width="1"/>
<path d="M121.5 256.5H139.2" stroke="#d2daf2" stroke-width="1"/>
<rect x="122" y="257.3" width="6.5" height="6.5" fill="#fdfbf0" stroke="#7f95d8" stroke-width="0.9"/>
<rect x="123.3" y="260" width="4" height="1.2" fill="#2a44b8"/>
<rect x="129.5" y="256" width="0.8" height="9" fill="#95a8e0"/>
<text x="131" y="263.6" font-family="Liberation Sans" font-size="8.6" letter-spacing="-0.3" fill="#1a1a1a" stroke="#1a1a1a" stroke-width="0.2">p</text>
<text x="144.3" y="264" font-family="Liberation Serif" font-size="10" fill="#cdcdcd">Enter paragraph text here</text>
<path d="M247 260.5L250 255.5H267.5V265.5H250Z" fill="#b7c2e6" stroke="#7b95e2" stroke-width="1"/>
<text x="254" y="263.8" font-family="Liberation Sans" font-size="9" fill="#1a1a1a" stroke="#1a1a1a" stroke-width="0.3">/</text>
<text x="260.5" y="263.6" font-family="Liberation Sans" font-size="8.6" letter-spacing="-0.3" fill="#1a1a1a" stroke="#1a1a1a" stroke-width="0.2">p</text>
<path d="M271 260.5L274 255.5H305.5V265.5H274Z" fill="#b7c2e6" stroke="#7b95e2" stroke-width="1"/>
<text x="278" y="263.8" font-family="Liberation Sans" font-size="9" fill="#1a1a1a" stroke="#1a1a1a" stroke-width="0.3">/</text>
<text x="284.5" y="263.6" font-family="Liberation Sans" font-size="8.6" letter-spacing="-0.3" fill="#1a1a1a" stroke="#1a1a1a" stroke-width="0.2">body</text>
<path d="M308.5 260.5L311.5 255.5H342.0V265.5H311.5Z" fill="#b7c2e6" stroke="#7b95e2" stroke-width="1"/>
<text x="315.5" y="263.8" font-family="Liberation Sans" font-size="9" fill="#1a1a1a" stroke="#1a1a1a" stroke-width="0.3">/</text>
<text x="322.0" y="263.6" font-family="Liberation Sans" font-size="8.6" letter-spacing="-0.3" fill="#1a1a1a" stroke="#1a1a1a" stroke-width="0.2">topic</text>
<path d="M345 260.5L348 255.5H375.0V265.5H348Z" fill="#b7c2e6" stroke="#7b95e2" stroke-width="1"/>
<text x="352" y="263.8" font-family="Liberation Sans" font-size="9" fill="#1a1a1a" stroke="#1a1a1a" stroke-width="0.3">/</text>
<text x="358.5" y="263.6" font-family="Liberation Sans" font-size="8.6" letter-spacing="-0.3" fill="#1a1a1a" stroke="#1a1a1a" stroke-width="0.2">dita</text>
</svg>
<svg class="a" style="left:0;top:0" width="788" height="492" viewBox="0 0 788 492">
<!-- ===== Left tools ===== -->
<path d="M8 105.3l-1.6 1.3 1.6 1.3M10.5 105.3l-1.6 1.3 1.6 1.3" stroke="#3a3a3a" stroke-width="0.9" fill="none"/>
<g fill="#9a9a9a"><rect x="12" y="115" width="1" height="1"/><rect x="14" y="115" width="1" height="1"/><rect x="16" y="115" width="1" height="1"/><rect x="18" y="115" width="1" height="1"/><rect x="20" y="115" width="1" height="1"/><rect x="22" y="115" width="1" height="1"/><rect x="24" y="115" width="1" height="1"/></g>
<rect x="3.5" y="121.5" width="28" height="14" rx="2.5" fill="url(#selg)" stroke="#606060" stroke-width="1"/>
<defs><linearGradient id="selg" x1="0" y1="0" x2="0" y2="1"><stop offset="0" stop-color="#e0e0e0"/><stop offset="1" stop-color="#c2c2c2"/></linearGradient></defs>
<rect x="4.5" y="122.5" width="26" height="12" rx="2" fill="none" stroke="#f0f0f0" stroke-width="0.8"/>
<path d="M7.5 124h3M9 124v8.5M7.5 132.5h3" stroke="#333" stroke-width="1" fill="none"/>
<path d="M12.5 123.5v9l2.2-2.3 4.3-2.3z" fill="#333"/>
<path d="M9 139v10.5l2.7-2.5 4.8-0.5z" fill="#333"/>
<path d="M7.5 164.5l9-9" stroke="#333" stroke-width="1.2"/>
<rect x="7.5" y="172.5" width="9.5" height="9" fill="none" stroke="#444" stroke-width="1"/>
<path d="M9.5 188.5h6l2.2 4.3-2.2 4.3h-6l-2.5-4.3z" fill="none" stroke="#444" stroke-width="1"/>
<rect x="8.5" y="204.5" width="7" height="9.5" fill="none" stroke="#444" stroke-width="1"/>
<path d="M11 207h2v5.5" stroke="#777" stroke-width="0.8" fill="none"/>
<rect x="7.5" y="219.5" width="9" height="9" fill="none" stroke="#555" stroke-width="1"/>
<rect x="9" y="221" width="6" height="6" fill="#e8e8e8" stroke="#777" stroke-width="0.8"/>
<path d="M9.5 226.5l2.5-2.5 2.5 2.5M10 221.5l2 2" stroke="#333" stroke-width="1" fill="none"/>
<g fill="#333"><rect x="6.5" y="236.5" width="6" height="1.3"/><rect x="6.5" y="239" width="6" height="1.3"/><rect x="6.5" y="241.5" width="4" height="1.3"/><circle cx="14" cy="243" r="3"/></g>
<rect x="7.5" y="253.5" width="8.5" height="8" fill="none" stroke="#777" stroke-width="1" stroke-dasharray="1 1.5"/>
<rect x="7" y="268.5" width="10" height="10.5" fill="#4a4a4a" stroke="#ededed" stroke-width="0.8"/>
<g fill="#444"><rect x="7" y="285" width="9" height="2"/><rect x="7" y="288" width="9" height="1.5"/><rect x="7" y="290.5" width="9" height="1.5"/><rect x="7" y="293" width="9" height="1.5" fill="#777"/></g>
<rect x="7" y="305" width="9" height="1" fill="#666"/>
<rect x="7" y="321.5" width="9" height="1.6" fill="#333"/>
<circle cx="12" cy="338" r="3.8" fill="#fff" stroke="#444" stroke-width="1"/>
<path d="M12 334.2a3.8 3.8 0 0 0 0 7.6z" fill="#444"/>
<rect x="7" y="350" width="6" height="6" fill="#333"/><rect x="10" y="353" width="6" height="6" fill="#333"/>
<rect x="4" y="364.5" width="18.5" height="13" rx="1.5" fill="#fff" stroke="#444" stroke-width="1"/>
<rect x="6" y="366.5" width="14.5" height="9" fill="#000"/>
<g fill="#111">
 <path d="M25.5 160.5h4l-2 2z M25.5 176.5h4l-2 2z M25.5 191.5h4l-2 2z M25.5 208.5h4l-2 2z M25.5 256.5h4l-2 2z M25.5 272.5h4l-2 2z M25.5 289.5h4l-2 2z M25.5 305.5h4l-2 2z M25.5 321.5h4l-2 2z M25.5 338.5h4l-2 2z M25.5 354.5h4l-2 2z M25.5 371h4l-2 2z"/>
</g>
<!-- ===== Right panel ===== -->
<path d="M748 120.8l-1.6 1.4 1.6 1.4M750.5 120.8l-1.6 1.4 1.6 1.4" stroke="#333" stroke-width="0.9" fill="none"/>
<path d="M757.3 120.5l4.2 4M761.5 120.5l-4.2 4" stroke="#111" stroke-width="1.4"/>
<rect x="547" y="126" width="64" height="11" fill="#d3d3d3"/>
<rect x="611" y="126" width="35" height="11" fill="#a4a4a4"/>
<rect x="610.5" y="126" width="1" height="11" fill="#7a7a7a"/><rect x="645.5" y="126" width="1" height="11" fill="#7a7a7a"/>
<text x="550.7" y="133.6" font-family="Liberation Sans" font-weight="bold" font-size="6.6" fill="#111" letter-spacing="-0.15">Vue de la structure</text>
<text x="615" y="133.6" font-family="Liberation Sans" font-weight="bold" font-size="6.6" fill="#222" letter-spacing="-0.25">Eléments</text>
<rect x="753.5" y="129.5" width="8" height="5" fill="#858585" stroke="#a8a8a8" stroke-width="0.8"/><path d="M754.5 131.5h6M754.5 133h6" stroke="#777" stroke-width="0.6"/>
<!-- horizontal scrollbar -->
<rect x="546" y="401" width="218" height="10" fill="#ebebeb"/>
<rect x="558.5" y="402" width="85" height="8" rx="1.5" fill="#dcdcdc" stroke="#a8a8a8" stroke-width="1"/>
<g fill="#666"><rect x="599" y="404" width="0.8" height="3"/><rect x="600.8" y="404" width="0.8" height="3"/><rect x="602.6" y="404" width="0.8" height="3"/></g>
<path d="M553 403.5v4l-3-2z M757 403.5v4l3-2z" fill="#222"/>
<rect x="546" y="411" width="218" height="5" fill="#d8d8d8"/>
<rect x="546" y="411" width="218" height="1" fill="#bdbdbd"/>
<g fill="#999"><rect x="650" y="413" width="1" height="1"/><rect x="652" y="413" width="1" height="1"/><rect x="654" y="413" width="1" height="1"/><rect x="656" y="413" width="1" height="1"/><rect x="658" y="413" width="1" height="1"/></g>
<!-- tree -->
<g stroke="#222" stroke-width="1" fill="none">
 <path d="M567.5 168v191M564.5 358.5h6"/>
 <path d="M567.5 180.5H581"/>
 <path d="M584.5 186v154M581.5 339.5h6"/>
 <path d="M584.5 198.5H597M584.5 216.5H597M584.5 235.5H597.5M584.5 290.5H597.5"/>
 <path d="M601.5 242v25.5M598.5 267.5h6M601.5 253.5H614"/>
 <path d="M601.5 297v25M598.5 321.5h6M601.5 308.5H614"/>
</g>
<path d="M589.5 188v6l3.5-3z" fill="#111"/>
</svg>

<svg class="a" style="left:0;top:0" width="788" height="492" viewBox="0 0 788 492">
<rect x="564.5" y="155.5" width="37" height="12" rx="2" fill="#ffffff" stroke="#555555" stroke-width="1"/>
<text x="568.25" y="164.8" text-anchor="middle" font-family="Liberation Sans" font-size="8.5" fill="#1a1a1a" letter-spacing="-0.1">-</text>
<rect x="572.0" y="156" width="1" height="11" fill="#555"/>
<rect x="573.0" y="156" width="0.8" height="11" fill="#dedede"/>
<text x="582.0" y="164.8" text-anchor="middle" font-family="Liberation Sans" font-size="8.5" fill="#1a1a1a" letter-spacing="-0.1">dita</text>
<rect x="591.0" y="156" width="1" height="11" fill="#555"/>
<rect x="592.0" y="156" width="0.8" height="11" fill="#dedede"/>
<text x="596.75" y="164.8" text-anchor="middle" font-family="Liberation Sans" font-size="8.5" fill="#1a1a1a" letter-spacing="-0.1">+</text>
<rect x="581.5" y="173.5" width="40" height="13" rx="2" fill="#585858" stroke="#3c3c3c" stroke-width="1"/>
<text x="585.25" y="182.8" text-anchor="middle" font-family="Liberation Sans" font-size="8.5" fill="#f0f0f0" letter-spacing="-0.1">-</text>
<rect x="589.0" y="174" width="1" height="12" fill="#9a9a9a"/>
<rect x="590.0" y="174" width="0.8" height="12" fill="#777"/>
<text x="601.25" y="182.8" text-anchor="middle" font-family="Liberation Sans" font-size="8.5" fill="#f0f0f0" letter-spacing="-0.1">topic</text>
<rect x="612.5" y="174" width="1" height="12" fill="#9a9a9a"/>
<rect x="613.5" y="174" width="0.8" height="12" fill="#777"/>
<text x="617.5" y="182.8" text-anchor="middle" font-family="Liberation Sans" font-size="8.5" fill="#f0f0f0" letter-spacing="-0.1">+</text>
<rect x="597.5" y="192.5" width="28.5" height="12" rx="2" fill="#ffffff" stroke="#555555" stroke-width="1"/>
<text x="606.5" y="201.8" text-anchor="middle" font-family="Liberation Sans" font-size="8.5" fill="#1a1a1a" letter-spacing="-0.1">title</text>
<rect x="615.5" y="193" width="1" height="11" fill="#555"/>
<rect x="616.5" y="193" width="0.8" height="11" fill="#dedede"/>
<text x="621.25" y="201.8" text-anchor="middle" font-family="Liberation Sans" font-size="8.5" fill="#1a1a1a" letter-spacing="-0.1">+</text>
<rect x="597.5" y="210.5" width="51" height="12.5" rx="2" fill="#ffffff" stroke="#555555" stroke-width="1"/>
<text x="618.0" y="219.8" text-anchor="middle" font-family="Liberation Sans" font-size="8.5" fill="#1a1a1a" letter-spacing="-0.1">shortdesc</text>
<rect x="638.5" y="211" width="1" height="11.5" fill="#555"/>
<rect x="639.5" y="211" width="0.8" height="11.5" fill="#dedede"/>
<text x="644.0" y="219.8" text-anchor="middle" font-family="Liberation Sans" font-size="8.5" fill="#1a1a1a" letter-spacing="-0.1">+</text>
<rect x="598.0" y="229.0" width="45.5" height="12.5" rx="2" fill="#ffffff" stroke="#555555" stroke-width="1"/>
<text x="601.75" y="238.3" text-anchor="middle" font-family="Liberation Sans" font-size="8.5" fill="#1a1a1a" letter-spacing="-0.1">-</text>
<rect x="605.5" y="229.5" width="1" height="11.5" fill="#555"/>
<rect x="606.5" y="229.5" width="0.8" height="11.5" fill="#dedede"/>
<text x="620.0" y="238.3" text-anchor="middle" font-family="Liberation Sans" font-size="8.5" fill="#1a1a1a" letter-spacing="-0.1">prolog</text>
<rect x="633.5" y="229.5" width="1" height="11.5" fill="#555"/>
<rect x="634.5" y="229.5" width="0.8" height="11.5" fill="#dedede"/>
<text x="639.0" y="238.3" text-anchor="middle" font-family="Liberation Sans" font-size="8.5" fill="#1a1a1a" letter-spacing="-0.1">+</text>
<rect x="614.5" y="247.5" width="38.5" height="12" rx="2" fill="#ffffff" stroke="#555555" stroke-width="1"/>
<text x="628.5" y="256.8" text-anchor="middle" font-family="Liberation Sans" font-size="8.5" fill="#1a1a1a" letter-spacing="-0.1">author</text>
<rect x="642.5" y="248" width="1" height="11" fill="#555"/>
<rect x="643.5" y="248" width="0.8" height="11" fill="#dedede"/>
<text x="648.25" y="256.8" text-anchor="middle" font-family="Liberation Sans" font-size="8.5" fill="#1a1a1a" letter-spacing="-0.1">+</text>
<rect x="598.0" y="284.0" width="40.5" height="12.5" rx="2" fill="#ffffff" stroke="#555555" stroke-width="1"/>
<text x="601.75" y="293.3" text-anchor="middle" font-family="Liberation Sans" font-size="8.5" fill="#1a1a1a" letter-spacing="-0.1">-</text>
<rect x="605.5" y="284.5" width="1" height="11.5" fill="#555"/>
<rect x="606.5" y="284.5" width="0.8" height="11.5" fill="#dedede"/>
<text x="618.0" y="293.3" text-anchor="middle" font-family="Liberation Sans" font-size="8.5" fill="#1a1a1a" letter-spacing="-0.1">body</text>
<rect x="629.5" y="284.5" width="1" height="11.5" fill="#555"/>
<rect x="630.5" y="284.5" width="0.8" height="11.5" fill="#dedede"/>
<text x="634.5" y="293.3" text-anchor="middle" font-family="Liberation Sans" font-size="8.5" fill="#1a1a1a" letter-spacing="-0.1">+</text>
<rect x="614.5" y="302.0" width="19" height="12.0" rx="2" fill="#ffffff" stroke="#555555" stroke-width="1"/>
<text x="619.0" y="311.3" text-anchor="middle" font-family="Liberation Sans" font-size="8.5" fill="#1a1a1a" letter-spacing="-0.1">p</text>
<rect x="623.5" y="302.5" width="1" height="11.0" fill="#555"/>
<rect x="624.5" y="302.5" width="0.8" height="11.0" fill="#dedede"/>
<text x="629.0" y="311.3" text-anchor="middle" font-family="Liberation Sans" font-size="8.5" fill="#1a1a1a" letter-spacing="-0.1">+</text>
</svg>
<svg class="a" style="left:0;top:0" width="788" height="492" viewBox="0 0 788 492">
<!-- main vertical scrollbar -->
<rect x="773" y="117" width="11" height="354" fill="#efefef"/>
<rect x="773" y="117" width="1" height="354" fill="#d0d0d0"/>
<rect x="774" y="118" width="10" height="10" fill="#fbfbfb"/>
<path d="M776.5 124.5l2.5-2.5 2.5 2.5z" fill="#222"/>
<rect x="774.5" y="128.5" width="9" height="166" rx="1.5" fill="url(#vsg)" stroke="#b4b4b4" stroke-width="1"/>
<defs><linearGradient id="vsg" x1="0" y1="0" x2="1" y2="0"><stop offset="0" stop-color="#f4f4f4"/><stop offset="1" stop-color="#d4d4d4"/></linearGradient></defs>
<g fill="#666"><rect x="777" y="215" width="4" height="0.8"/><rect x="777" y="217" width="4" height="0.8"/><rect x="777" y="219" width="4" height="0.8"/></g>
<path d="M776.5 465.5h5l-2.5 2.5z" fill="#222"/>
<!-- status bar -->
<text x="5.5" y="483.5" font-family="Liberation Sans" font-size="7.6" fill="#1a1a1a" letter-spacing="-0.3">Ench. : A</text>
<text x="36.5" y="483.5" font-family="Liberation Sans" font-size="7.6" fill="#1a1a1a" letter-spacing="-0.3">El :dita &gt; topic</text>
<path d="M260.5 477.5v7.5" stroke="#222" stroke-width="1.3"/><path d="M267 477.5v7.5l-5-3.75z" fill="#222"/>
<path d="M280.5 477.5v7.5l-4-3.75z" fill="#bdbdbd"/>
<rect x="284" y="475.5" width="36" height="11" fill="#fff"/>
<text x="286.5" y="484" font-family="Liberation Sans" font-size="8" fill="#111">1</text>
<path d="M324 477.5v7.5l4-3.75z" fill="#bdbdbd"/>
<path d="M338 477.5v7.5l5-3.75z" fill="#222"/><path d="M344 477.5v7.5" stroke="#222" stroke-width="1.3"/>
<text x="351.5" y="484" font-family="Liberation Sans" font-size="7.6" fill="#1a1a1a" letter-spacing="-0.2">1 de 1 *</text>
<rect x="599" y="475.5" width="36" height="11" fill="#fff"/>
<text x="601.5" y="484" font-family="Liberation Sans" font-size="8" fill="#222">1</text>
<path d="M645 477v8l4-4z" fill="#222"/><rect x="650" y="477" width="4.5" height="8" rx="1" fill="none" stroke="#222" stroke-width="1.2"/>
<rect x="660" y="480.5" width="8" height="1.6" fill="#222"/>
<rect x="671.5" y="475.5" width="99.5" height="12" rx="2" fill="#f2f2f2" stroke="#7a7a7a" stroke-width="1"/>
<text x="675" y="484.5" font-family="Liberation Sans" font-size="8" fill="#111" letter-spacing="-0.2">100%</text>
<path d="M764 480.5h5l-2.5 2.5z" fill="#222"/>
<path d="M775 481.3h7.5M778.75 477.5v7.5" stroke="#222" stroke-width="1.6"/>
<!-- menu right icons -->
<circle cx="595" cy="9.6" r="3.6" fill="none" stroke="#222" stroke-width="1.3"/>
<path d="M597.6 12.3l3.4 3.3" stroke="#222" stroke-width="1.8"/>
<rect x="603" y="5" width="1" height="11" fill="#bdbdbd"/>
<path d="M607.5 5.5l-2.3 4.8 2.3 4.8M612.5 5.5l2.3 4.8-2.3 4.8M611.3 5.5l-2.3 9.6" stroke="#222" stroke-width="1.1" fill="none"/>
<path d="M620.2 15.2l1-2.8 4.6-6.8 1.4 1-4.6 6.8z" fill="#222" stroke="#222" stroke-width="0.6"/>
<rect x="631.5" y="6.5" width="7.5" height="7.5" fill="none" stroke="#3a78d0" stroke-width="1"/>
<path d="M630 6.5h1.5M630 14h1.5M639 6.5h1.5M639 14h1.5M631.5 5v1.5M639 5v1.5M631.5 14v1.5M639 14v1.5" stroke="#3a78d0" stroke-width="1"/>
<rect x="633.5" y="8.5" width="3.5" height="3.5" fill="none" stroke="#7aa4e0" stroke-width="0.8"/>
<rect x="645.5" y="5" width="1" height="11" fill="#c4c4c4"/>
<!-- close glyph -->
<path d="M765.5 4.2l5.5 4.8M771 4.2l-5.5 4.8" stroke="#111" stroke-width="1.6"/>
</svg>


</body></html>
